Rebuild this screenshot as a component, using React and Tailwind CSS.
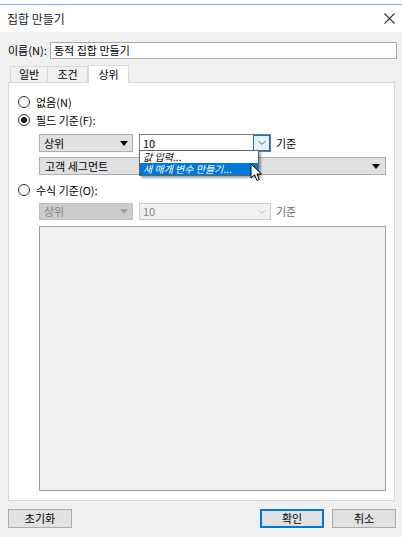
import { ChevronDown } from "lucide-react";

const font = { fontFamily: '"Malgun Gothic", "Noto Sans CJK KR", sans-serif' };

const Radio = ({ checked, label }) => (
  <div className="flex items-center gap-[6px] h-[16px]">
    <span className="w-[12px] h-[12px] rounded-full border border-[#333333] bg-white flex items-center justify-center">
      {checked && <span className="w-[6px] h-[6px] rounded-full bg-[#1a1a1a]" />}
    </span>
    <span className="text-[11px] text-[#000000] leading-none">{label}</span>
  </div>
);

const Caret = ({ color = "#000000" }) => (
  <svg width="8" height="5" viewBox="0 0 8 5">
    <path d="M0 0 L8 0 L4 5 Z" fill={color} />
  </svg>
);

const Cursor = () => (
  <svg width="14" height="20" viewBox="0 0 14 20">
    <path
      d="M1 1 L1 15 L4.5 11.8 L7 17.5 L9.3 16.5 L6.9 11 L11.5 11 Z"
      fill="#ffffff"
      stroke="#000000"
      strokeWidth="1"
      strokeLinejoin="round"
    />
  </svg>
);

export default function App() {
  return (
    <div className="w-[402px] h-[537px] bg-white flex flex-col overflow-hidden" style={font}>
      <div className="h-[4px] bg-white" />
      <div className="h-[1px] bg-[#7eb4ea]" />
      <div className="h-[27px] bg-white flex items-center justify-between pl-[7px] pr-[7px]">
        <span className="text-[12px] text-[#1a1a1a]">집합 만들기</span>
        <svg width="11" height="11" viewBox="0 0 11 11">
          <path d="M0.5 0.5 L10.5 10.5 M10.5 0.5 L0.5 10.5" stroke="#333333" strokeWidth="1.1" />
        </svg>
      </div>

      <div className="flex-1 bg-[#f0f0f0] flex flex-col px-[8px] pt-[10px] pb-[9px]">
        <div className="flex items-center h-[16px]">
          <span className="text-[11px] w-[42px] leading-none">이름(N):</span>
          <div className="flex-1 h-[17px] bg-white border border-[#a9a9a9] flex items-center px-[3px] text-[11px] leading-none mr-[-3px]">
            동적 집합 만들기
          </div>
        </div>

        <div className="flex items-end h-[17px] mt-[7px] pl-[2px]">
          <div className="w-[38px] h-[16px] bg-[#f0f0f0] border border-b-0 border-[#d9d9d9] flex items-center justify-center text-[11px] leading-none">
            일반
          </div>
          <div className="w-[40px] h-[16px] bg-[#f0f0f0] border border-l-0 border-b-0 border-[#d9d9d9] flex items-center justify-center text-[11px] leading-none">
            조건
          </div>
          <div className="w-[41px] h-[18px] bg-white border border-b-0 border-[#d9d9d9] flex items-center justify-center text-[11px] leading-none mb-[-1px] relative z-10">
            상위
          </div>
        </div>

        <div className="flex-1 bg-white border border-[#d9d9d9] mr-[-1px] relative flex flex-col pl-[9px] pt-[11px] pb-[9px] pr-[8px]">
          <Radio label="없음(N)" />
          <div className="mt-[2px]">
            <Radio checked label="필드 기준(F):" />
          </div>

          <div className="pl-[21px] mt-[6px] flex items-center">
            <div className="w-[94px] h-[18px] bg-[#e1e1e1] border border-[#adadad] flex items-center justify-between px-[4px] text-[11px] leading-none">
              <span>상위</span>
              <Caret />
            </div>
            <div className="ml-[6px] w-[132px] h-[18px] bg-white border border-[#7a7a7a] flex items-center text-[11px] leading-none">
              <span className="flex-1 pl-[3px]">10</span>
              <span className="w-[17px] h-[16px] bg-[#e5f1fb] border border-[#0078d7] flex items-center justify-center">
                <ChevronDown size={12} strokeWidth={1.5} color="#333333" />
              </span>
            </div>
            <span className="ml-[5px] text-[11px] leading-none">기준</span>
          </div>

          <div className="pl-[21px] mt-[5px]">
            <div className="w-[347px] h-[18px] bg-[#e1e1e1] border border-[#adadad] flex items-center justify-between px-[5px] text-[11px] leading-none">
              <span>고객 세그먼트</span>
              <Caret />
            </div>
          </div>

          <div className="mt-[7px]">
            <Radio label="수식 기준(O):" />
          </div>

          <div className="pl-[21px] mt-[5px] flex items-center">
            <div className="w-[94px] h-[17px] bg-[#cccccc] border border-[#bfbfbf] flex items-center justify-between px-[4px] text-[11px] leading-none text-[#838383]">
              <span>상위</span>
              <Caret color="#a0a0a0" />
            </div>
            <div className="ml-[6px] w-[132px] h-[17px] bg-[#f0f0f0] border border-[#cccccc] flex items-center text-[11px] leading-none text-[#838383]">
              <span className="flex-1 pl-[3px]">10</span>
              <span className="w-[17px] flex items-center justify-center">
                <ChevronDown size={12} strokeWidth={1.2} color="#a0a0a0" />
              </span>
            </div>
            <span className="ml-[5px] text-[11px] leading-none text-[#6d6d6d]">기준</span>
          </div>

          <div className="ml-[21px] mt-[6px] w-[347px] flex-1 bg-[#f0f0f0] border border-[#a0a0a0]" />

          <div className="absolute left-[130px] top-[67px] w-[120px] bg-white border border-[#646464] shadow-[2px_2px_2px_rgba(0,0,0,0.35)] z-20 flex flex-col">
            <div className="h-[12px] pl-[3px] text-[10px] italic leading-[12px] whitespace-nowrap">
              값 입력...
            </div>
            <div className="h-[12px] pl-[3px] text-[10px] italic leading-[12px] whitespace-nowrap bg-[#0078d7] text-white">
              새 매개 변수 만들기...
            </div>
          </div>
          <div className="absolute left-[241px] top-[80px] z-30">
            <Cursor />
          </div>
        </div>

        <div className="flex items-center justify-between mt-[8px] h-[19px]">
          <div className="w-[64px] h-[19px] bg-[#e1e1e1] border border-[#adadad] flex items-center justify-center text-[11px] leading-none">
            초기화
          </div>
          <div className="flex gap-[8px] mr-[-2px]">
            <div className="w-[64px] h-[19px] bg-[#e1e1e1] border-2 border-[#0078d7] flex items-center justify-center text-[11px] leading-none">
              확인
            </div>
            <div className="w-[64px] h-[19px] bg-[#e1e1e1] border border-[#adadad] flex items-center justify-center text-[11px] leading-none">
              취소
            </div>
          </div>
        </div>
      </div>
    </div>
  );
}
